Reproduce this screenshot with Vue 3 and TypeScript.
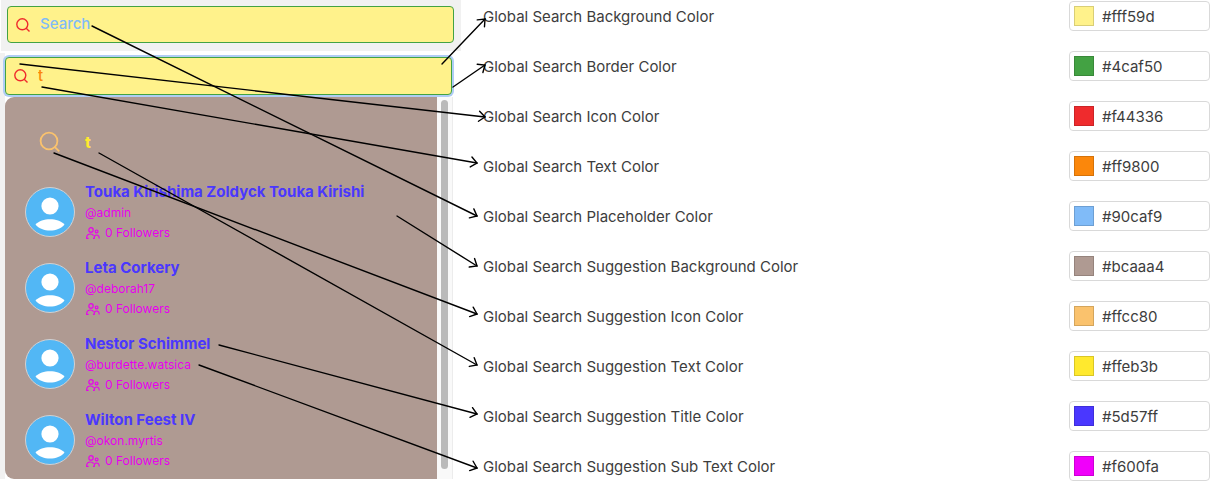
<script setup lang="ts">
import { ref } from 'vue'

interface Setting {
  id: string
  label: string
  swatch: string
  hex: string
}

interface Person {
  name: string
  handle: string
  followers: number
}

const emptyQuery = ref('')
const query = ref('t')

const settings = ref<Setting[]>([
  { id: 'bg', label: 'Global Search Background Color', swatch: '#fff28b', hex: '#fff59d' },
  { id: 'border', label: 'Global Search Border Color', swatch: '#43a243', hex: '#4caf50' },
  { id: 'icon', label: 'Global Search Icon Color', swatch: '#ef2b2d', hex: '#f44336' },
  { id: 'text', label: 'Global Search Text Color', swatch: '#fb870b', hex: '#ff9800' },
  { id: 'placeholder', label: 'Global Search Placeholder Color', swatch: '#80bbf8', hex: '#90caf9' },
  { id: 's-bg', label: 'Global Search Suggestion Background Color', swatch: '#af9a92', hex: '#bcaaa4' },
  { id: 's-icon', label: 'Global Search Suggestion Icon Color', swatch: '#fac26d', hex: '#ffcc80' },
  { id: 's-text', label: 'Global Search Suggestion Text Color', swatch: '#ffe92e', hex: '#ffeb3b' },
  { id: 's-title', label: 'Global Search Suggestion Title Color', swatch: '#4a37ff', hex: '#5d57ff' },
  { id: 's-sub', label: 'Global Search Suggestion Sub Text Color', swatch: '#f000fa', hex: '#f600fa' },
])

const people: Person[] = [
  { name: 'Touka Kirishima Zoldyck Touka Kirishi', handle: '@admin', followers: 0 },
  { name: 'Leta Corkery', handle: '@deborah17', followers: 0 },
  { name: 'Nestor Schimmel', handle: '@burdette.watsica', followers: 0 },
  { name: 'Wilton Feest IV', handle: '@okon.myrtis', followers: 0 },
]

// Start and end point of every pointer from the preview to its setting
const arrows: [number, number, number, number][] = [
  [442, 64, 485, 19],
  [453, 87, 485, 65],
  [20, 64, 485, 117],
  [42, 87, 477, 163],
  [92, 26, 477, 216],
  [397, 216, 477, 266],
  [54, 153, 477, 314],
  [99, 153, 477, 365],
  [219, 345, 477, 414],
  [199, 365, 477, 468],
]
</script>

<template>
  <main class="page">
    <section class="preview">
      <div class="strip">
        <label class="search">
          <svg class="glass" viewBox="0 0 14 14" aria-hidden="true">
            <circle cx="6.3" cy="6.3" r="5.5" />
            <path d="M10.2 10.2 13.5 13.4" />
          </svg>
          <input v-model="emptyQuery" type="text" placeholder="Search" aria-label="Search" />
        </label>
      </div>
      <div class="open">
        <label class="search focused">
          <svg class="glass" viewBox="0 0 14 14" aria-hidden="true">
            <circle cx="6.3" cy="6.3" r="5.5" />
            <path d="M10.2 10.2 13.5 13.4" />
          </svg>
          <input v-model="query" type="text" placeholder="Search" aria-label="Search with suggestions" />
        </label>
        <div class="dropdown">
          <div class="panel">
            <div class="term">
              <svg class="term-icon" viewBox="0 0 22 22" aria-hidden="true">
                <circle cx="10" cy="10" r="8.4" />
                <path d="M15.4 15.6 20.2 20.4" />
              </svg>
              <span>{{ query }}</span>
            </div>
            <ul class="people">
              <li v-for="p in people" :key="p.handle" class="person">
                <svg class="avatar" viewBox="0 0 50 50" aria-hidden="true">
                  <circle cx="25" cy="25" r="24.5" fill="#52b7f5" stroke="#d3d0d0" />
                  <circle cx="25" cy="19" r="8.6" fill="#fff" />
                  <path d="M10.5 37.5C17 30.6 33 30.6 39.5 37.5C33 45.6 17 45.6 10.5 37.5Z" fill="#fff" />
                </svg>
                <div class="info">
                  <strong>{{ p.name }}</strong>
                  <span>{{ p.handle }}</span>
                  <span class="followers">
                    <svg viewBox="0 0 15 12" aria-hidden="true">
                      <circle cx="6" cy="2.9" r="2.2" />
                      <circle cx="11.6" cy="4.4" r="1.4" />
                      <path d="M3.6 11.4H1.7V10.4Q1.9 7 5.4 7Q7.6 7 8.6 8.6M8 11.4H9.2Q9 8 11.6 8Q14.2 8 14.2 11.4" />
                    </svg>
                    {{ p.followers }} Followers
                  </span>
                </div>
              </li>
            </ul>
          </div>
          <div class="track"><div class="thumb"></div></div>
        </div>
      </div>
    </section>

    <section class="settings">
      <div v-for="s in settings" :key="s.id" class="setting">
        <label :for="s.id">{{ s.label }}</label>
        <div class="field">
          <input v-model="s.swatch" class="swatch" type="color" :aria-label="s.label + ' swatch'" />
          <input :id="s.id" v-model="s.hex" class="hex" type="text" />
        </div>
      </div>
    </section>

    <svg class="arrows" aria-hidden="true">
      <defs>
        <marker id="head" viewBox="-9 -7 12 14" markerWidth="12" markerHeight="14" markerUnits="userSpaceOnUse" orient="auto">
          <path d="M-6 -5 0 0-6 5" />
        </marker>
      </defs>
      <line v-for="(a, i) in arrows" :key="i" :x1="a[0]" :y1="a[1]" :x2="a[2]" :y2="a[3]" marker-end="url(#head)" />
    </svg>
  </main>
</template>

<style>
body {
  background: #fff;
}
</style>

<style scoped>
.page {
  position: relative;
  display: flex;
  font-family: Inter, "Liberation Sans", sans-serif;
  font-size: 15px;
  color: #3d3d3d;
}

.page * {
  box-sizing: border-box;
}

.preview {
  flex: 0 0 461px;
}

.strip {
  margin-left: 1px;
  padding: 6px 7px 8px 6px;
  background: #f1f1f1;
}

.open {
  margin-top: 2px;
  margin-right: 8px;
  padding-top: 4px;
  padding-left: 5px;
  background: linear-gradient(to right, #f1f1f1 5px, #fff 5px);
}

.search {
  display: flex;
  align-items: center;
  gap: 10px;
  height: 37px;
  padding: 0 8px;
  border: 1px solid #43a243;
  border-radius: 4px;
  background: #fff28b;
}

.focused {
  height: 38px;
  margin-right: 1px;
  box-shadow: 0 0 0 2px #afcdf5;
}

.glass {
  flex: none;
  width: 14px;
  height: 14px;
  fill: none;
  stroke: #ef2b2d;
  stroke-width: 1.4;
}

.search input {
  flex: 1;
  min-width: 0;
  padding: 0 0 2px;
  border: 0;
  outline: 0;
  background: transparent;
  font: inherit;
  font-weight: 500;
  color: #fb870b;
}

.search input::placeholder {
  color: #80bbf8;
  opacity: 1;
}

.dropdown {
  display: flex;
  margin-top: 2px;
}

.panel {
  flex: 1;
  padding: 32px 20px 8px;
  border-radius: 9px 0 0 9px;
  background: #af9a92;
}

.term {
  display: flex;
  align-items: center;
  gap: 24px;
  height: 26px;
  padding-left: 14px;
  font-weight: 800;
  color: #ffe92e;
}

.term-icon {
  width: 22px;
  height: 22px;
  fill: none;
  stroke: #fac26d;
  stroke-width: 1.8;
}

.people {
  display: flex;
  flex-direction: column;
  gap: 14px;
  margin: 26px 0 0;
  padding: 0;
  list-style: none;
}

.person {
  display: flex;
  align-items: center;
  gap: 10px;
}

.avatar {
  flex: none;
  width: 50px;
  height: 50px;
}

.info {
  display: flex;
  flex-direction: column;
  font-size: 12px;
  line-height: 20px;
  color: #e800ee;
}

.info strong {
  font-size: 15px;
  line-height: 22px;
  color: #4a37ff;
  white-space: nowrap;
}

.followers {
  display: flex;
  align-items: center;
  gap: 5px;
}

.followers svg {
  width: 15px;
  height: 12px;
  fill: none;
  stroke: currentColor;
  stroke-width: 1.2;
}

.track {
  flex: 0 0 16px;
  padding: 3px 4px 10px;
  border-right: 1px solid #ececec;
  background: #f9f9f9;
}

.thumb {
  height: 100%;
  border-radius: 4px;
  background: #bababa;
}

.settings {
  flex: 1;
  display: flex;
  flex-direction: column;
  gap: 20px;
  padding: 1px 8px 0 22px;
}

.setting {
  display: flex;
  align-items: center;
  justify-content: space-between;
  height: 30px;
}

.field {
  display: flex;
  align-items: center;
  gap: 8px;
  width: 141px;
  height: 30px;
  padding: 0 4px;
  border: 1px solid #d9d9d9;
  border-radius: 4px;
}

.swatch {
  flex: none;
  width: 20px;
  height: 20px;
  padding: 0;
  border: 0;
  background: none;
  appearance: none;
}

.swatch::-webkit-color-swatch-wrapper {
  padding: 0;
}

.swatch::-webkit-color-swatch {
  border: 1px solid rgba(0, 0, 0, 0.15);
  border-radius: 0;
}

.hex {
  flex: 1;
  min-width: 0;
  padding: 0;
  border: 0;
  outline: 0;
  background: transparent;
  font: inherit;
  color: inherit;
}

.arrows {
  position: absolute;
  inset: 0;
  width: 100%;
  height: 100%;
  fill: none;
  stroke: #000;
  stroke-width: 1.4;
  stroke-linecap: round;
  pointer-events: none;
}
</style>
